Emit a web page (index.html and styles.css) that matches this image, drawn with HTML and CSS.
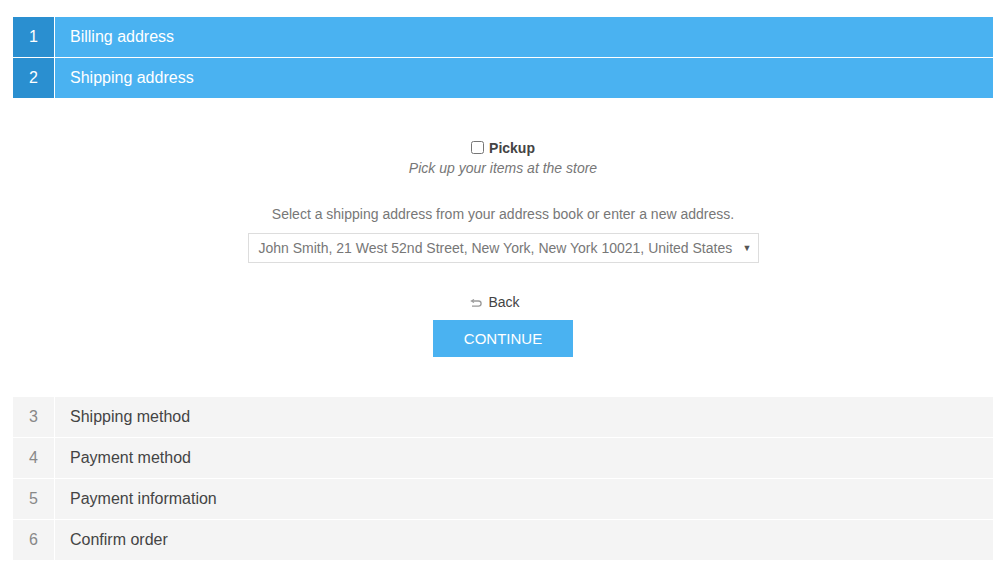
FILE: index.html
```html
<!DOCTYPE html>
<html>
<head>
<meta charset="utf-8">
<link rel="stylesheet" href="styles.css">
</head>
<body>
<div class="checkout">
  <ul class="steps">
    <li class="step active"><span class="num">1</span><span class="title">Billing address</span></li>
    <li class="step active"><span class="num">2</span><span class="title">Shipping address</span></li>
  </ul>
  <div class="content">
    <div class="pickup">
      <label class="pickup-label"><input type="checkbox" class="cb"><span>Pickup</span></label>
      <div class="pickup-desc">Pick up your items at the store</div>
    </div>
    <div class="address">
      <div class="address-label">Select a shipping address from your address book or enter a new address.</div>
      <div class="select">
        <span class="select-text">John Smith, 21 West 52nd Street, New York, New York 10021, United States</span>
        <span class="caret">▼</span>
      </div>
    </div>
    <div class="buttons">
      <a class="back"><svg class="back-icon" width="12" height="10" viewBox="0 0 12 10"><path d="M4 1.5 L1.5 3 L4 4.5" fill="none" stroke="#9a9a9a" stroke-width="1.3"/><path d="M2 3 H8.5 A2.6 2.6 0 0 1 8.5 8.2 H2" fill="none" stroke="#9a9a9a" stroke-width="1.3"/></svg><span>Back</span></a>
      <button class="continue">CONTINUE</button>
    </div>
  </div>
  <ul class="steps">
    <li class="step"><span class="num">3</span><span class="title">Shipping method</span></li>
    <li class="step"><span class="num">4</span><span class="title">Payment method</span></li>
    <li class="step"><span class="num">5</span><span class="title">Payment information</span></li>
    <li class="step"><span class="num">6</span><span class="title">Confirm order</span></li>
  </ul>
</div>
</body>
</html>
```
FILE: styles.css
```css
html, body {
  margin: 0;
  padding: 0;
  background: #fff;
  font-family: "Liberation Sans", Arial, sans-serif;
}
.checkout {
  padding: 17px 10px 0 13px;
}
.steps {
  list-style: none;
  margin: 0;
  padding: 0;
  display: flex;
  flex-direction: column;
  gap: 1px;
}
.step {
  display: flex;
  height: 40px;
  gap: 1px;
  font-size: 16px;
}
.step .num {
  width: 41px;
  display: flex;
  align-items: center;
  justify-content: center;
  background: #f4f4f4;
  color: #888;
}
.step .title {
  flex: 1;
  display: flex;
  align-items: center;
  padding-left: 15px;
  background: #f4f4f4;
  color: #444;
}
.step.active .num {
  background: #2a8fd0;
  color: #fff;
}
.step.active .title {
  background: #4ab2f1;
  color: #fff;
}
.content {
  display: flex;
  flex-direction: column;
  align-items: center;
  padding: 40px 0 40px;
  font-size: 14px;
}
.pickup {
  display: flex;
  flex-direction: column;
  align-items: center;
}
.pickup-label {
  display: flex;
  align-items: center;
  font-weight: bold;
  color: #444;
  height: 19px;
}
.cb {
  width: 13px;
  height: 13px;
  margin: 0 5px 0 0;
}
.pickup-desc {
  font-style: italic;
  color: #777;
  margin-top: 1px;
  line-height: 20px;
}
.address {
  display: flex;
  flex-direction: column;
  align-items: center;
  margin-top: 26px;
}
.address-label {
  color: #777;
  line-height: 20px;
}
.select {
  margin-top: 9px;
  width: 511px;
  height: 30px;
  border: 1px solid #ddd;
  box-sizing: border-box;
  display: flex;
  align-items: center;
  justify-content: space-between;
  padding: 0 6px 0 10px;
  color: #777;
}
.caret {
  font-size: 9px;
  color: #555;
}
.buttons {
  display: flex;
  flex-direction: column;
  align-items: center;
  margin-top: 29px;
}
.back {
  display: flex;
  align-items: center;
  gap: 6px;
  color: #444;
  line-height: 20px;
  margin-right: 16px;
}
.back-icon {
  margin-top: 1px;
}
.continue {
  margin-top: 8px;
  width: 140px;
  height: 37px;
  border: none;
  background: #4ab2f1;
  color: #fff;
  font-family: "Liberation Sans", Arial, sans-serif;
  font-size: 15px;
  padding: 0;
}
```
